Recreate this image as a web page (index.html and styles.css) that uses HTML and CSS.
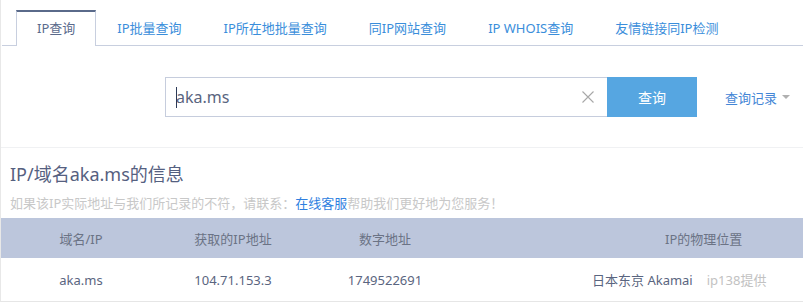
FILE: index.html
```html
<!DOCTYPE html>
<html lang="zh-CN">
<head>
<meta charset="utf-8">
<title>IP查询</title>
<link rel="stylesheet" href="styles.css">
</head>
<body>
<div class="page">
  <ul class="tabs">
    <li class="tab active">IP查询</li>
    <li class="tab">IP批量查询</li>
    <li class="tab">IP所在地批量查询</li>
    <li class="tab">同IP网站查询</li>
    <li class="tab">IP WHOIS查询</li>
    <li class="tab">友情链接同IP检测</li>
  </ul>
  <div class="search">
    <div class="field">
      <input class="query" type="text" value="aka.ms">
      <span class="caret"></span>
      <svg class="clear" width="12" height="12" viewBox="0 0 12 12"><path d="M0.5 0.5L11.5 11.5M11.5 0.5L0.5 11.5" stroke="#a8a8a8" stroke-width="1.1" fill="none"/></svg>
    </div>
    <button class="submit" type="button">查询</button>
    <a class="history">查询记录<i class="tri"></i></a>
  </div>
  <div class="info">
    <h2 class="title">IP/域名aka.ms的信息</h2>
    <p class="note">如果该IP实际地址与我们所记录的不符，请联系：<a class="link">在线客服</a>帮助我们更好地为您服务！</p>
  </div>
  <table class="result">
    <colgroup><col class="c1"><col class="c2"><col class="c3"><col class="c4"></colgroup>
    <thead>
      <tr><th>域名/IP</th><th>获取的IP地址</th><th>数字地址</th><th class="loc-h">IP的物理位置</th></tr>
    </thead>
    <tbody>
      <tr><td>aka.ms</td><td>104.71.153.3</td><td>1749522691</td><td class="loc">日本东京 Akamai<span class="src">ip138提供</span></td></tr>
    </tbody>
  </table>
</div>
</body>
</html>
```
FILE: styles.css
```css
html, body {
  margin: 0;
  padding: 0;
  background: #fff;
}
body {
  font-family: "Noto Sans", "Noto Sans CJK SC", sans-serif;
  font-size: 13px;
  color: #5a6580;
}
.page {
  width: 820px;
  border-left: 1px solid #e8e8e8;
  border-bottom: 1px solid #e6e6e6;
}
.tabs {
  display: flex;
  list-style: none;
  margin: 0 0 0 1px;
  padding: 10px 0 0 14px;
  border-bottom: 1px solid #c8cfdf;
}
.tab {
  padding: 0 20px;
  height: 33px;
  line-height: 33px;
  border: 1px solid transparent;
  border-top-width: 2px;
  border-bottom: 0;
  margin-bottom: -1px;
  color: #3a8edb;
  white-space: nowrap;
}
.tab.active {
  border-color: #c8cfdf;
  border-top-color: #5a6a8a;
  background: #fff;
  color: #5a6a8c;
  height: 34px;
}
.search {
  display: flex;
  align-items: center;
  padding: 31px 0 30px 164px;
  border-bottom: 1px solid #f0f1f3;
}
.field {
  position: relative;
  width: 441px;
  height: 38px;
  border: 1px solid #c6cddd;
  border-right: 0;
}
.query {
  box-sizing: border-box;
  width: 100%;
  height: 100%;
  border: 0;
  outline: none;
  padding: 0 40px 0 10px;
  font-family: "Noto Sans", "Noto Sans CJK SC", sans-serif;
  font-size: 16px;
  color: #5a6580;
  background: transparent;
}
.caret {
  position: absolute;
  left: 10px;
  top: 9px;
  width: 1px;
  height: 21px;
  background: #2c3a58;
}
.clear {
  position: absolute;
  right: 13px;
  top: 13px;
}
.submit {
  width: 90px;
  height: 40px;
  border: 0;
  background: #56a6e1;
  color: #fff;
  font-family: "Noto Sans CJK SC", sans-serif;
  font-size: 14px;
  padding: 0;
}
.history {
  margin-left: 28px;
  color: #4486d6;
  font-size: 13px;
  display: flex;
  align-items: center;
}
.tri {
  margin-left: 5px;
  width: 0;
  height: 0;
  border-left: 4px solid transparent;
  border-right: 4px solid transparent;
  border-top: 4px solid #b0b0b0;
}
.info {
  padding: 14px 9px 5px;
}
.title {
  margin: 0;
  font-size: 18px;
  font-weight: normal;
  line-height: 24px;
  color: #556080;
}
.note {
  margin: 7px 0 0;
  line-height: 20px;
  font-size: 13px;
  color: #c8c8c8;
}
.link {
  color: #2f7fdf;
}
.result {
  width: 802px;
  border-collapse: collapse;
  table-layout: fixed;
}
.c1 { width: 160px; }
.c2 { width: 144px; }
.c3 { width: 160px; }
.result th {
  height: 40px;
  padding: 0;
  background: #bcc6dc;
  font-weight: normal;
  color: #6b7385;
  text-align: center;
}
.result td {
  height: 43px;
  padding: 0;
  text-align: center;
  color: #5a6580;
}
.result .loc-h {
  text-align: left;
  padding-left: 200px;
}
.result .loc {
  text-align: left;
  padding-left: 127px;
  white-space: nowrap;
}
.src {
  margin-left: 14px;
  color: #c2c2c2;
}
```
